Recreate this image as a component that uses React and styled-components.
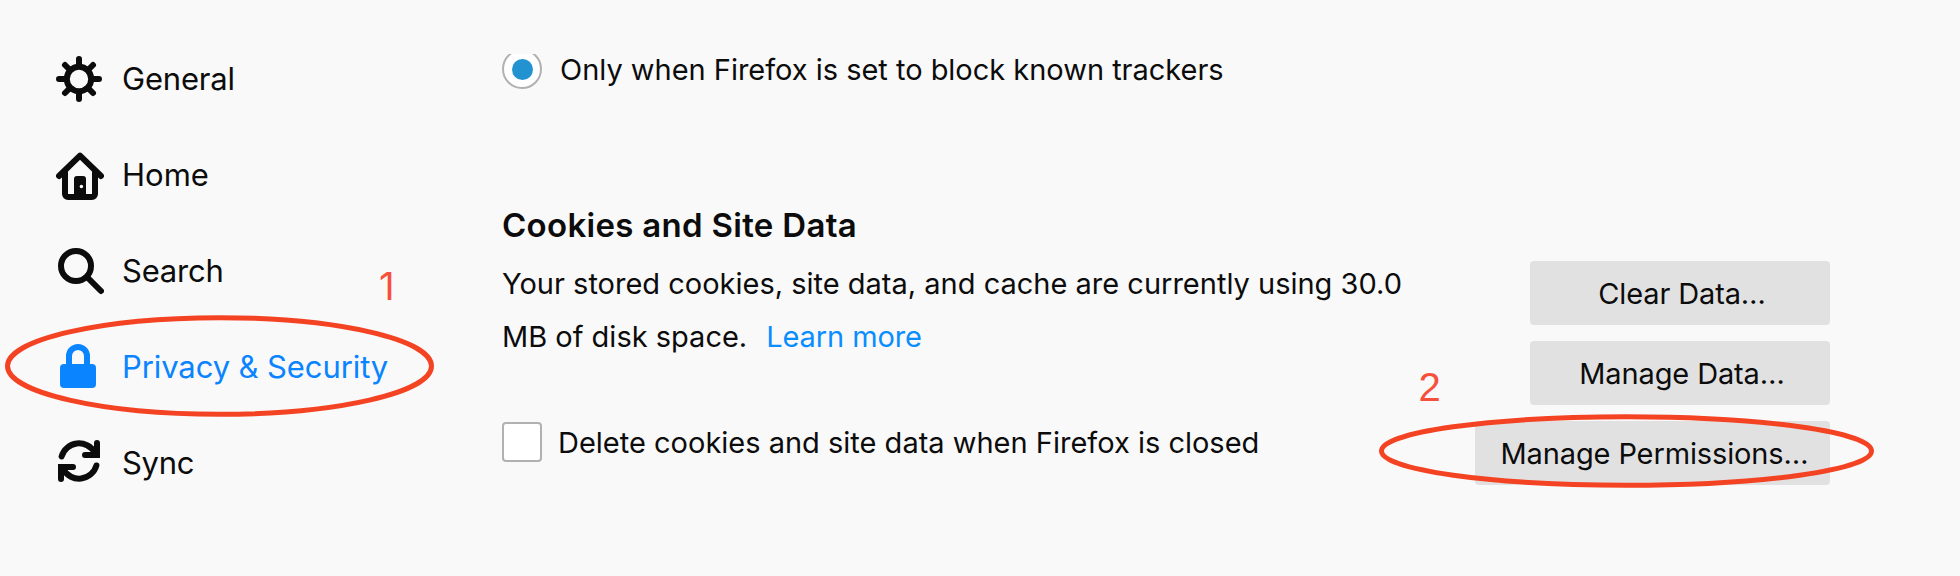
import React from "react";
import styled, { createGlobalStyle } from "styled-components";

const GlobalStyle = createGlobalStyle`
  *, *::before, *::after { box-sizing: border-box; }
  body {
    margin: 0;
    background: #f9f9f9;
    color: #0c0c0d;
    font-family: Inter, "Liberation Sans", sans-serif;
  }
`;

const Page = styled.div`
  position: relative;
  display: flex;
  width: 1960px;
  height: 576px;
  overflow: hidden;
  background: #f9f9f9;
`;

const Sidebar = styled.nav`
  flex: none;
  width: 502px;
  padding: 32px 0 0 56px;
`;

const NavItem = styled.a`
  display: flex;
  align-items: center;
  gap: 18px;
  height: 96px;
  color: ${(p) => (p.$active ? "#0a84ff" : "#0c0c0d")};
  font-size: 31px;
  letter-spacing: ${(p) => p.$tracking}px;
  white-space: nowrap;
`;

const NavLabel = styled.span`
  padding-bottom: 4px;
`;

const NavIcon = styled.svg`
  flex: none;
  width: 48px;
  height: 48px;
  fill: none;
  stroke: currentColor;
  stroke-width: 6;
  stroke-linecap: round;
  stroke-linejoin: round;
`;

const Main = styled.main`
  flex: none;
  width: 1328px;
  padding-top: 49px;
  font-size: 29px;
`;

const OptionRow = styled.label`
  display: flex;
  align-items: center;
  gap: ${(p) => p.$gap}px;
  height: 40px;
  letter-spacing: ${(p) => p.$tracking}px;
  white-space: nowrap;
`;

const Radio = styled.span`
  display: grid;
  place-items: center;
  width: 40px;
  height: 40px;
  border: 2px solid #b1b1b1;
  border-radius: 50%;
  background: #fff;
  clip-path: inset(5px 0 0 0);

  &::after {
    content: "";
    width: 21px;
    height: 21px;
    border-radius: 50%;
    background: #2292d0;
  }
`;

const Checkbox = styled.span`
  width: 40px;
  height: 40px;
  border: 2px solid #b1b1b1;
  border-radius: 4px;
  background: #fff;
`;

const Heading = styled.h2`
  margin: 116px 0 0;
  font-size: 33px;
  font-weight: 600;
  line-height: 40px;
  letter-spacing: 0.3px;
`;

const Columns = styled.div`
  display: flex;
  justify-content: space-between;
  margin-top: 12px;
`;

const Details = styled.div`
  flex: none;
  width: 910px;
`;

const Usage = styled.div`
  margin-bottom: 59px;
  line-height: 53px;
`;

const UsageLine = styled.div`
  display: flex;
  gap: 19px;
  white-space: nowrap;
`;

const Link = styled.a`
  color: #0a8dff;
  letter-spacing: -0.1px;
`;

const Actions = styled.div`
  display: flex;
  flex-direction: column;
  align-items: flex-end;
  gap: 16px;
  padding-top: 4px;
`;

const Button = styled.button`
  width: ${(p) => (p.$wide ? 355 : 300)}px;
  height: 64px;
  padding: 0 0 0 4px;
  border: 0;
  border-radius: 4px;
  background: #e1e1e1;
  color: #0c0c0d;
  font: 29px Inter, sans-serif;
  letter-spacing: -0.13px;
`;

const Annotations = styled.svg`
  position: absolute;
  inset: 0;
  width: 1960px;
  height: 576px;
  fill: none;
  stroke: #f44323;
  stroke-width: 5;
  pointer-events: none;
`;

const StepNumber = styled.span`
  position: absolute;
  left: ${(p) => p.$x}px;
  top: ${(p) => p.$y}px;
  color: #f6503c;
  font-family: ${(p) => p.$family}, sans-serif;
  font-size: ${(p) => p.$size}px;
  line-height: 46px;
`;

const GearIcon = () => (
  <NavIcon viewBox="0 0 48 48">
    <circle cx="23" cy="23" r="12.2" />
    <path d="M23 9V3M23 37v6M9 23H3M37 23h6M13 13L9 9M33 13l4-4M13 33l-4 4M33 33l4 4" />
  </NavIcon>
);

const HomeIcon = () => (
  <NavIcon viewBox="0 0 48 48">
    <path d="M3 24L24 3.6L45 24" />
    <path d="M9 20v22a3 3 0 0 0 3 3h24a3 3 0 0 0 3-3V20" />
    <path d="M18 46V27a3 3 0 0 1 3-3h6a3 3 0 0 1 3 3v19z" fill="currentColor" stroke="none" />
    <circle cx="25.4" cy="34.5" r="1.7" fill="#fff" stroke="none" />
  </NavIcon>
);

const SearchIcon = () => (
  <NavIcon viewBox="0 0 48 48">
    <circle cx="20" cy="18" r="15" />
    <path d="M31 29l14 14" />
  </NavIcon>
);

const LockIcon = () => (
  <NavIcon viewBox="0 0 48 48">
    <path d="M13 22V12a9 9 0 0 1 18 0v10" />
    <rect x="4" y="20" width="36" height="24" rx="4" fill="currentColor" stroke="none" />
  </NavIcon>
);

const SyncIcon = () => (
  <NavIcon viewBox="0 0 48 48">
    <path d="M5.6 16.5A18 18 0 0 1 38.6 12.5" />
    <path d="M41 3v12H29" />
    <path d="M38 18h6v-6z" fill="currentColor" stroke="none" />
    <path d="M40.4 25.5A18 18 0 0 1 7.4 29.5" />
    <path d="M5 39V27h12" />
    <path d="M8 24H2v6z" fill="currentColor" stroke="none" />
  </NavIcon>
);

const navItems = [
  { label: "General", Icon: GearIcon, tracking: -0.2 },
  { label: "Home", Icon: HomeIcon, tracking: 0 },
  { label: "Search", Icon: SearchIcon, tracking: -0.2 },
  { label: "Privacy & Security", Icon: LockIcon, tracking: -0.1, active: true },
  { label: "Sync", Icon: SyncIcon, tracking: -0.3 },
];

export default function App() {
  return (
    <Page>
      <GlobalStyle />
      <Sidebar>
        {navItems.map(({ label, Icon, tracking, active }) => (
          <NavItem key={label} $active={active} $tracking={tracking}>
            <Icon />
            <NavLabel>{label}</NavLabel>
          </NavItem>
        ))}
      </Sidebar>
      <Main>
        <OptionRow $gap={18} $tracking={-0.02}>
          <Radio />
          Only when Firefox is set to block known trackers
        </OptionRow>
        <Heading>Cookies and Site Data</Heading>
        <Columns>
          <Details>
            <Usage>
              <UsageLine>Your stored cookies, site data, and cache are currently using 30.0</UsageLine>
              <UsageLine>
                MB of disk space.
                <Link>Learn more</Link>
              </UsageLine>
            </Usage>
            <OptionRow $gap={16} $tracking={0}>
              <Checkbox />
              Delete cookies and site data when Firefox is closed
            </OptionRow>
          </Details>
          <Actions>
            <Button>Clear Data…</Button>
            <Button>Manage Data…</Button>
            <Button $wide>Manage Permissions…</Button>
          </Actions>
        </Columns>
      </Main>
      <Annotations viewBox="0 0 1960 576">
        <ellipse cx="219.5" cy="366" rx="212" ry="48.3" />
        <ellipse cx="1626.5" cy="451" rx="245" ry="34.2" />
      </Annotations>
      <StepNumber $x={379} $y={263} $size={38.5} $family="Inter">1</StepNumber>
      <StepNumber $x={1418.5} $y={364} $size={40} $family='"Liberation Sans"'>2</StepNumber>
    </Page>
  );
}
